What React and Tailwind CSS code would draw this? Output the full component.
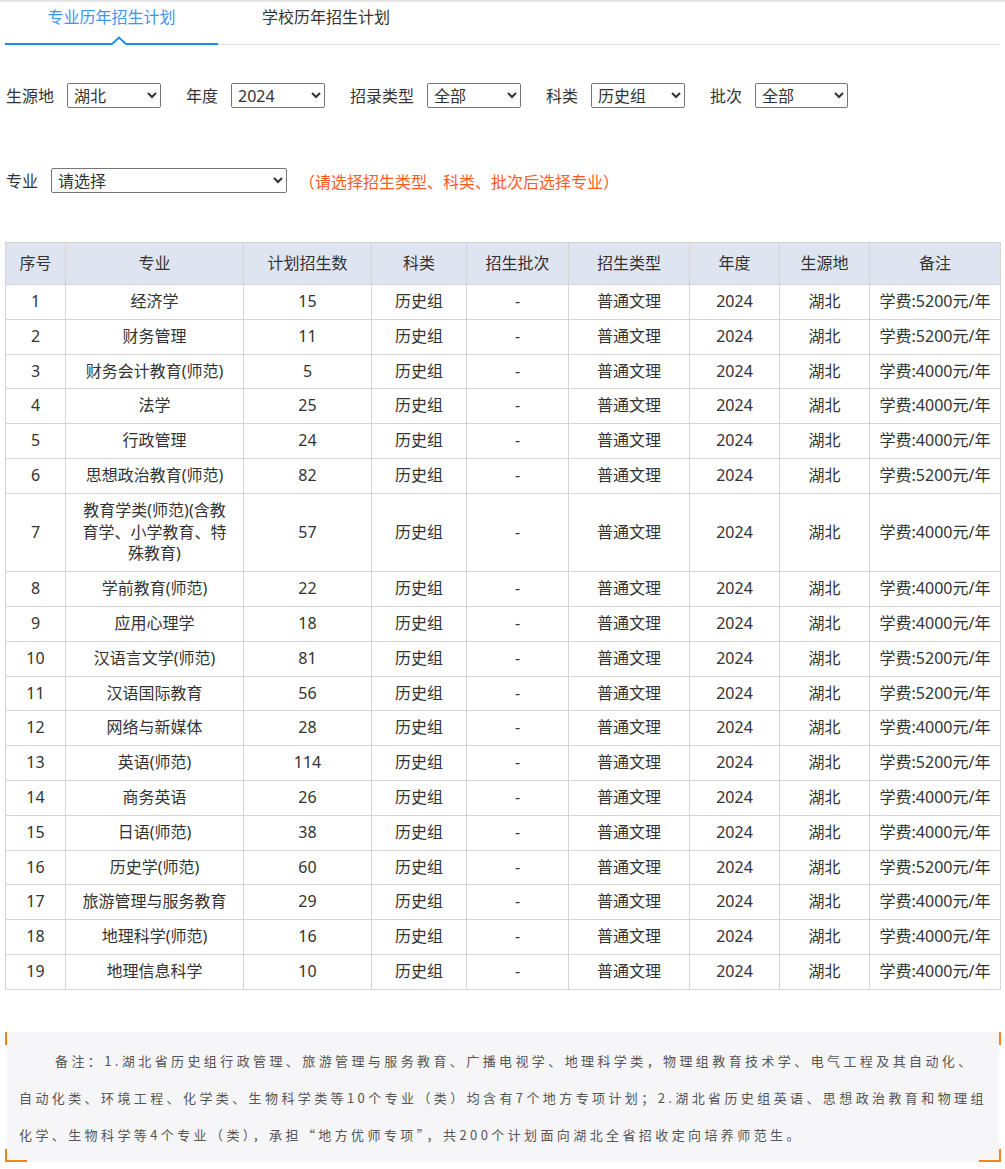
import React from "react";

const rows = [
    ["1", "经济学", "15", "5200"],
    ["2", "财务管理", "11", "5200"],
    ["3", "财务会计教育(师范)", "5", "4000"],
    ["4", "法学", "25", "4000"],
    ["5", "行政管理", "24", "4000"],
    ["6", "思想政治教育(师范)", "82", "5200"],
    ["7", "教育学类(师范)(含教育学、小学教育、特殊教育)", "57", "4000"],
    ["8", "学前教育(师范)", "22", "4000"],
    ["9", "应用心理学", "18", "4000"],
    ["10", "汉语言文学(师范)", "81", "5200"],
    ["11", "汉语国际教育", "56", "5200"],
    ["12", "网络与新媒体", "28", "4000"],
    ["13", "英语(师范)", "114", "5200"],
    ["14", "商务英语", "26", "4000"],
    ["15", "日语(师范)", "38", "4000"],
    ["16", "历史学(师范)", "60", "5200"],
    ["17", "旅游管理与服务教育", "29", "4000"],
    ["18", "地理科学(师范)", "16", "4000"],
    ["19", "地理信息科学", "10", "4000"],
];

const headers = [
    ["序号", "w-[60px]"],
    ["专业", "w-[178px]"],
    ["计划招生数", "w-[128px]"],
    ["科类", "w-[95px]"],
    ["招生批次", "w-[102px]"],
    ["招生类型", "w-[121px]"],
    ["年度", "w-[90px]"],
    ["生源地", "w-[90px]"],
    ["备注", "w-[131px]"],
];

function Filter({ label, options, width, first = false }) {
    return (
        <div className={`flex items-center ${first ? "ml-[1px]" : "ml-[25px]"}`}>
            <span className="mr-[13px]">{label}</span>
            <select
                className={`${width} h-[25px] rounded-[2px] border border-[#767676] bg-white pl-[2px] text-[16px] text-[#333]`}
                defaultValue={options[0]}
            >
                {options.map((o) => (
                    <option key={o}>{o}</option>
                ))}
            </select>
        </div>
    );
}

export default function App() {
    const td = "border border-[#d4d4d4] px-[8px] py-[6px] text-center leading-[21.8px]";
    const cjk = "font-['Noto_Sans_CJK_SC',sans-serif]";

    return (
        <div
            className="min-h-[1169px] bg-white text-[16px] text-[#333]"
            style={{ fontFamily: '"Noto Sans", "Noto Sans CJK SC", sans-serif' }}
        >
            <div className="h-[2px] bg-[#e6e6e6]" />

            {/* ========== TABS ========== */}
            <div className="mx-[5px] flex border-b border-[#e0e0e0]">
                <div className="relative h-[43px] w-[213px] border-b-2 border-[#1a8cf0] text-center leading-[30px] text-[#3d95f2] -mb-[1px]">
                    专业历年招生计划
                    <svg
                        className="absolute left-[107px] top-[34px]"
                        width="14"
                        height="10"
                        viewBox="0 0 14 10"
                    >
                        <polygon points="0,9 7,2 14,9" fill="#fff" />
                        <polyline
                            points="0,8 7,1.5 14,8"
                            fill="none"
                            stroke="#1a8cf0"
                            strokeWidth="2"
                        />
                    </svg>
                </div>
                <div className="h-[42px] w-[216px] text-center leading-[30px] text-[#333]">
                    学校历年招生计划
                </div>
            </div>

            {/* ========== FILTERS ========== */}
            <div className="mt-[38px] flex items-center px-[5px]">
                <Filter first label="生源地" options={["湖北"]} width="w-[94px]" />
                <Filter label="年度" options={["2024"]} width="w-[94px]" />
                <Filter label="招录类型" options={["全部"]} width="w-[94px]" />
                <Filter label="科类" options={["历史组"]} width="w-[94px]" />
                <Filter label="批次" options={["全部"]} width="w-[93px]" />
            </div>

            <div className="mt-[60px] flex items-center px-[5px]">
                <Filter first label="专业" options={["请选择"]} width="w-[236px]" />
                <span className={`ml-[12px] text-[#ff5a1f] ${cjk}`}>
                    （请选择招生类型、科类、批次后选择专业）
                </span>
            </div>

            {/* ========== TABLE ========== */}
            <div className="mt-[49px] px-[5px]">
                <table className="w-[995px] table-fixed border-collapse">
                    <thead>
                        <tr className="bg-[#dfe5f0]">
                            {headers.map(([h, w]) => (
                                <th
                                    key={h}
                                    className={`${w} border border-[#d4d4d4] px-[4px] py-[10px] text-center font-normal leading-[21px]`}
                                >
                                    {h}
                                </th>
                            ))}
                        </tr>
                    </thead>
                    <tbody>
                        {rows.map(([no, name, count, fee]) => (
                            <tr key={no}>
                                <td className={td}>{no}</td>
                                <td className="border border-[#d4d4d4] px-[10px] py-[6px] text-center leading-[21.8px]">
                                    {name}
                                </td>
                                <td className={td}>{count}</td>
                                <td className={td}>历史组</td>
                                <td className={td}>-</td>
                                <td className={td}>普通文理</td>
                                <td className={td}>2024</td>
                                <td className={td}>湖北</td>
                                <td className="border border-[#d4d4d4] px-[2px] py-[6px] text-center leading-[21.8px] whitespace-nowrap">
                                    学费:{fee}元/年
                                </td>
                            </tr>
                        ))}
                    </tbody>
                </table>
            </div>

            {/* ========== NOTE ========== */}
            <div className="relative ml-[5px] mt-[42px] h-[130px] w-[996px] px-[2px]">
                <div className={`h-full bg-[#f6f6f8] pl-[12px] pt-[10px] text-[13px] leading-[37px] tracking-[3.4px] text-[#555] whitespace-nowrap ${cjk}`}>
                    <div className="pl-[36px]">
                        备注：1.湖北省历史组行政管理、旅游管理与服务教育、广播电视学、地理科学类，物理组教育技术学、电气工程及其自动化、
                    </div>
                    <div>
                        自动化类、环境工程、化学类、生物科学类等10个专业（类）均含有7个地方专项计划；2.湖北省历史组英语、思想政治教育和物理组
                    </div>
                    <div>
                        化学、生物科学等4个专业（类），承担“地方优师专项”，共200个计划面向湖北全省招收定向培养师范生。
                    </div>
                </div>
                {/* corner marks */}
                <span className="absolute left-0 top-0 h-[13px] w-[2px] bg-[#f08519]" />
                <span className="absolute right-0 top-0 h-[13px] w-[2px] bg-[#f08519]" />
                <span className="absolute bottom-0 left-0 h-[13px] w-[2px] bg-[#f08519]" />
                <span className="absolute bottom-0 left-0 h-[2px] w-[22px] bg-[#f08519]" />
                <span className="absolute bottom-0 right-0 h-[13px] w-[2px] bg-[#f08519]" />
                <span className="absolute bottom-0 right-0 h-[2px] w-[22px] bg-[#f08519]" />
            </div>
        </div>
    );
}
